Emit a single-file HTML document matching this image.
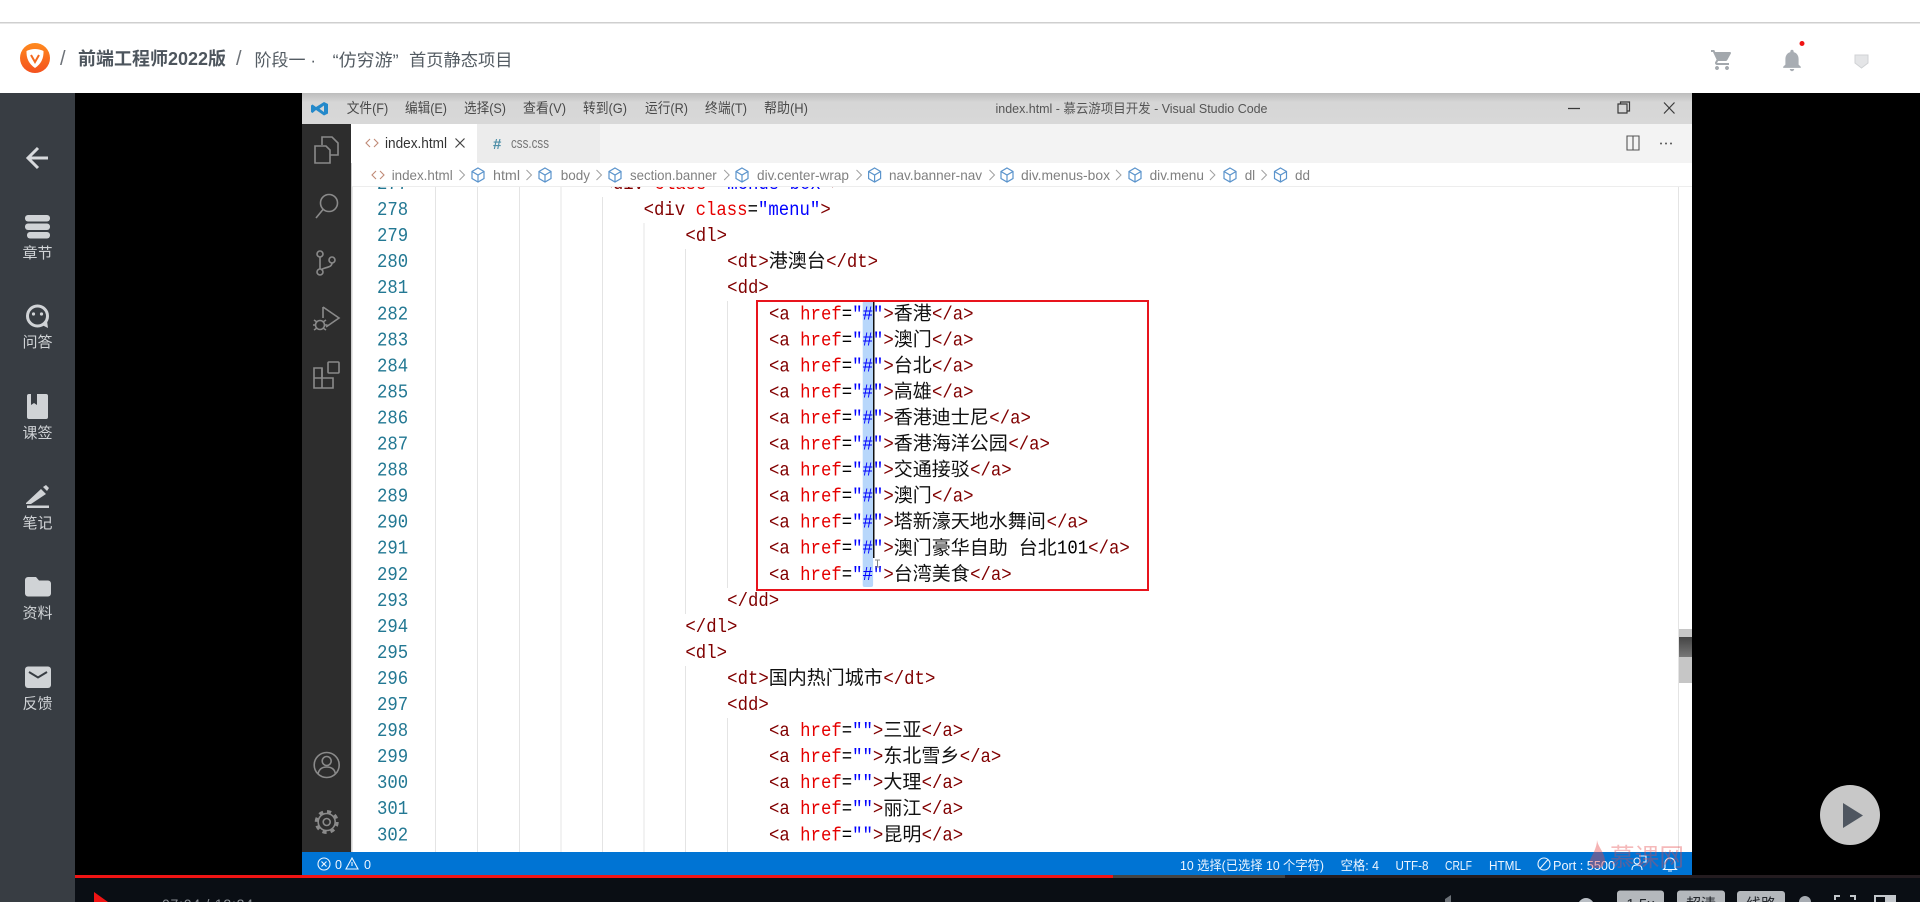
<!DOCTYPE html>
<html lang="zh"><head><meta charset="utf-8"><title>仿穷游首页静态项目</title>
<style>
html,body{margin:0;padding:0;background:#000;width:1920px;height:902px;overflow:hidden}
svg{display:block}
text{font-family:"Liberation Sans","Noto Sans CJK SC",sans-serif}
.m{font-family:"Liberation Mono",monospace;font-size:19px;fill:#800000;transform:scaleX(.9123)}
.n{fill:#237893}
.a{fill:#e50000}.e{fill:#000}.v{fill:#0000ff}
.c{font-family:"Noto Sans CJK SC",sans-serif;font-size:19px;fill:#111}
.s{font-size:15px;fill:#d0d3d6;text-anchor:middle}
.mn{font-size:14px;fill:#4a4a4a}
.b{font-size:14px;fill:#808080}
.st{font-size:13px;fill:#eef6ff}
.vid{filter:blur(.35px)}
.i{fill:none;stroke:#8a8a8a;stroke-width:1.6}
.ch{fill:none;stroke:#a0a0a0;stroke-width:1}
.cu{fill:none;stroke:#5b94cc;stroke-width:1.2}
.ht{fill:none;stroke:#c08a76;stroke-width:1.1}
</style></head><body>
<svg width="1920" height="902" viewBox="0 0 1920 902" xmlns="http://www.w3.org/2000/svg">
<defs>
<linearGradient id="lg" x1="0" y1="0" x2="0" y2="1"><stop offset="0" stop-color="#ff8a1e"/><stop offset="1" stop-color="#f4511e"/></linearGradient>
<linearGradient id="tb" x1="0" y1="0" x2="0" y2="1"><stop offset="0" stop-color="#bdbdbd"/><stop offset=".3" stop-color="#d6d6d6"/><stop offset="1" stop-color="#d8d8d8"/></linearGradient>
<linearGradient id="sl" x1="0" y1="0" x2="0" y2="1"><stop offset="0" stop-color="#444"/><stop offset="1" stop-color="#777"/></linearGradient>
<g id="cube"><path class="cu" d="M0-7 6-3.5V3.5L0 7-6 3.5V-3.5ZM-6-3.5 0 0 6-3.5M0 0V7"/></g>
<g id="chev"><path class="ch" d="M-2.5-5 2.5 0-2.5 5"/></g>
<g id="ht"><path class="ht" d="M-2-4-6 0-2 4M2-4 6 0 2 4"/></g>
</defs>
<rect width="1920" height="902" fill="#000"/>
<!-- header -->
<rect width="1920" height="93" fill="#fff"/>
<rect y="22" width="1920" height="1.5" fill="#cfcfcf"/>
<circle cx="35" cy="58" r="15" fill="url(#lg)"/>
<path d="M26.5 51Q35 47 43.5 51 44 62 35 68 26 62 26.5 51Z" fill="#fff"/>
<path d="M31 55 35 62 39 55" fill="none" stroke="#f4691e" stroke-width="2"/>
<text x="60" y="65" font-size="20" fill="#6d7278">/</text>
<text x="78" y="65" font-size="18" font-weight="700" fill="#4d555d" textLength="148" lengthAdjust="spacingAndGlyphs">前端工程师2022版</text>
<text x="236" y="65" font-size="20" fill="#6d7278">/</text>
<text x="254.5" y="66" font-size="17" fill="#545c63" textLength="61.500" lengthAdjust="spacingAndGlyphs">阶段一 ·</text>
<text x="332.600" y="66" font-size="17" fill="#545c63" textLength="66" lengthAdjust="spacingAndGlyphs">“仿穷游”</text>
<text x="409" y="66" font-size="17" fill="#545c63" textLength="103.500" lengthAdjust="spacingAndGlyphs">首页静态项目</text>
<path transform="translate(1710,48)" fill="#a3a8ad" d="M7 18c-1.1 0-1.99.9-1.99 2S5.9 22 7 22s2-.9 2-2-.9-2-2-2zM1 2v2h2l3.6 7.59-1.35 2.45c-.16.28-.25.61-.25.96 0 1.1.9 2 2 2h12v-2H7.42c-.14 0-.25-.11-.25-.25l.03-.12.9-1.63h7.45c.75 0 1.41-.41 1.75-1.03l3.58-6.47c.08-.14.12-.31.12-.48 0-.55-.45-1-1-1H5.21l-.94-2H1zm16 16c-1.1 0-1.99.9-1.99 2s.89 2 1.99 2 2-.9 2-2-.9-2-2-2z"/>
<path transform="translate(1778.8,47) scale(1.1)" fill="#a8adb3" d="M12 22c1.1 0 2-.9 2-2h-4c0 1.1.9 2 2 2zm6-6v-5c0-3.07-1.63-5.64-4.5-6.32V4c0-.83-.67-1.5-1.5-1.5s-1.5.67-1.5 1.5v.68C7.64 5.36 6 7.92 6 11v5l-2 2v1h16v-1l-2-2z"/>
<circle cx="1802" cy="43.5" r="2.5" fill="#f01414"/>
<path d="M1855 55h13v8l-6.5 5-6.5-5Z" fill="#e4e5e7" stroke="#d0d2d4"/>
<!-- sidebar -->
<rect y="93" width="75" height="809" fill="#383d43"/>
<path d="M48 158H29M38 148 28 158 38 168" fill="none" stroke="#d8dadd" stroke-width="3"/>
<g fill="#d0d3d6">
<rect x="25" y="215" width="25" height="6.5" rx="3"/><rect x="25" y="223.5" width="25" height="6.5" rx="3"/><rect x="27" y="232" width="23" height="6.5" rx="3"/>
<text class="s" x="37.5" y="258">章节</text>
<circle cx="37.5" cy="316" r="10" fill="none" stroke="#d0d3d6" stroke-width="3"/><circle cx="33.5" cy="314" r="1.6"/><circle cx="41.5" cy="314" r="1.6"/><path d="M42 325l6 3-1-7Z"/>
<text class="s" x="37.5" y="347">问答</text>
<rect x="27" y="394" width="21" height="25" rx="2"/><path d="M31 394v11l3-2 3 2V394Z" fill="#383d43"/>
<text class="s" x="37.5" y="438">课签</text>
<path d="M26 503 41 489l5 5-15 10H26ZM43 487l3-2 3 3-2 3ZM27 505.5h22v2.5H27Z"/>
<text class="s" x="37.5" y="528">笔记</text>
<path d="M25 580a3 3 0 0 1 3-3h8l3 3.500h9a3 3 0 0 1 3 3v10a3 3 0 0 1-3 3H28a3 3 0 0 1-3-3Z"/>
<text class="s" x="37.5" y="618">资料</text>
<rect x="25" y="666.5" width="26" height="21.500" rx="3"/><path d="M29 672 38 677.500 47 672" fill="none" stroke="#383d43" stroke-width="2"/>
<text class="s" x="37.500" y="708.500">反馈</text>
</g>
<!-- bottom bar -->
<rect x="75" y="875" width="1845" height="27" fill="#0a0e14"/>
<rect x="75" y="875" width="1845" height="3" fill="#241c20"/>
<rect x="75" y="875" width="1210" height="3" fill="#444"/>
<rect x="75" y="875" width="1038" height="3" fill="#f01414"/>
<path d="M94 892 108 902 94 912Z" fill="#f01414"/>
<text x="162" y="909" font-size="14" fill="#8a8f95" textLength="91">07:04 / 12:24</text>
<path d="M1445 902v-3l6-4v7Z" fill="#6d7278"/>
<circle cx="1586" cy="906" r="8" fill="#b9bec4"/>
<g fill="#b4b8bc"><rect x="1617" y="890.500" width="47" height="20" rx="3"/><rect x="1677" y="890.500" width="48" height="20" rx="3"/><rect x="1737" y="891" width="48" height="20" rx="3"/></g>
<g font-size="15" fill="#22262b" text-anchor="middle"><text x="1640.500" y="909">1.5x</text><text x="1701" y="909">超清</text><text x="1761" y="909">线路</text></g>
<circle cx="1805" cy="902" r="6" fill="#a7acb2"/>
<path d="M1835 900v-4h5M1850 896h5v4" fill="none" stroke="#c3c7cc" stroke-width="2"/>
<path d="M1875 902v-6h20v6" fill="none" stroke="#c3c7cc" stroke-width="2"/><rect x="1885" y="896" width="10" height="6" fill="#c3c7cc"/>
<!-- play -->
<circle cx="1850" cy="815" r="30" fill="#c8c8c8"/>
<path d="M1843 803 1863 815.500 1843 828Z" fill="#4f5660"/>
<!-- VS Code video -->
<g class="vid">
<rect x="302" y="93" width="1390" height="782" fill="#fff"/>
<rect x="302" y="93" width="1390" height="31" fill="url(#tb)"/>
<path fill="#2489ca" fill-rule="evenodd" d="M324 102 328 104V113.500L324 115.500 316 110 312.500 113 311 112V105.500L312.500 104.500 316 107ZM324 105.500 319.500 108.750 324 112Z"/>
<g class="mn">
<text x="346.700" y="113" textLength="41.600" lengthAdjust="spacingAndGlyphs">文件(F)</text>
<text x="405" y="113" textLength="42" lengthAdjust="spacingAndGlyphs">编辑(E)</text>
<text x="464" y="113" textLength="42" lengthAdjust="spacingAndGlyphs">选择(S)</text>
<text x="523" y="113" textLength="43" lengthAdjust="spacingAndGlyphs">查看(V)</text>
<text x="583" y="113" textLength="44" lengthAdjust="spacingAndGlyphs">转到(G)</text>
<text x="645" y="113" textLength="43" lengthAdjust="spacingAndGlyphs">运行(R)</text>
<text x="705" y="113" textLength="42" lengthAdjust="spacingAndGlyphs">终端(T)</text>
<text x="764" y="113" textLength="44" lengthAdjust="spacingAndGlyphs">帮助(H)</text>
</g>
<text x="995.500" y="113" font-size="13" fill="#555" textLength="272" lengthAdjust="spacingAndGlyphs">index.html - 慕云游项目开发 - Visual Studio Code</text>
<path d="M1568 108.500h12M1618 104h9v9h-9ZM1620.500 104v-2h9v9h-2.500M1664 102.500l10.500 11M1674.500 102.500l-10.500 11" fill="none" stroke="#3a3a3a" stroke-width="1.200"/>
<!-- activity -->
<rect x="302" y="124" width="49" height="728" fill="#2d2d2d"/>
<g class="i">
<path d="M322 145v-8h10l6 6v12h-8"/><path d="M315 146h11l4 4v13h-15Z"/>
<circle cx="329" cy="203" r="8.500"/><path d="M323 209.500 316 218"/>
<circle cx="320" cy="254" r="3"/><circle cx="320" cy="272" r="3"/><circle cx="332" cy="260" r="3"/><path d="M320 257v12M332 263c0 5-8 4-11 7"/>
<path d="M323 307 339 318 326 327M323 307v11"/><circle cx="320" cy="325" r="4.500"/><path d="M314 320l3 2M326 320l-3 2M313 325h2.500M325 325h2.500M314 330l3-2M326 330l-3-2"/>
<path d="M314 368h8v20h-8ZM314 378h19v10h-11"/><path d="M322 378v-10h0"/><rect x="328" y="362" width="11" height="11" rx="1"/>
<circle cx="326.700" cy="765" r="12.500"/><circle cx="326.700" cy="761" r="4.500"/><path d="M318 774c1-5 4-7 8.700-7s8 2 8.700 7"/>
<circle cx="326.700" cy="822" r="3.500"/><circle cx="326.700" cy="822" r="8.500"/><circle cx="326.700" cy="822" r="10.500" stroke-width="3" stroke-dasharray="4.200 4.050"/>
</g>
<!-- tabs -->
<rect x="351" y="124" width="1341" height="39" fill="#f3f3f3"/>
<rect x="351" y="124" width="126" height="39" fill="#fff"/>
<rect x="477" y="124" width="123" height="39" fill="#ececec"/>
<use href="#ht" x="372" y="143"/>
<text x="385" y="148" font-size="14.500" fill="#333" textLength="62" lengthAdjust="spacingAndGlyphs">index.html</text>
<path d="M455.500 138.500l9 9M464.500 138.500l-9 9" stroke="#444" stroke-width="1.200" fill="none"/>
<text x="493" y="149" font-size="15" font-weight="700" fill="#4f8fa8">#</text>
<text x="511" y="148" font-size="14.500" fill="#777" textLength="38" lengthAdjust="spacingAndGlyphs">css.css</text>
<path d="M1627 136h12v14h-12ZM1633 136v14" fill="none" stroke="#555" stroke-width="1.100"/>
<g fill="#555"><circle cx="1661" cy="143.500" r="1"/><circle cx="1666" cy="143.500" r="1"/><circle cx="1671" cy="143.500" r="1"/></g>
<!-- editor -->
<rect x="351" y="163" width="1.500" height="689" fill="#cfcfcf"/>
<g fill="#e4e4e4">
<rect x="435" y="186" width="1" height="666"/><rect x="477" y="186" width="1" height="666"/><rect x="519" y="186" width="1" height="666"/><rect x="560.500" y="186" width="1" height="666"/>
<rect x="602" y="197" width="1" height="655"/><rect x="643.500" y="223" width="1" height="629"/>
<rect x="685" y="249" width="1" height="365"/><rect x="685" y="666" width="1" height="186"/>
<rect x="727" y="301" width="1" height="287"/><rect x="727" y="718" width="1" height="134"/>
<rect x="1678" y="186" width="1" height="666"/>
</g>
<rect x="862.700" y="301" width="10.400" height="286" rx="2" fill="#b8d7fb"/>
<g transform="translate(0,-1)">
<!-- line numbers -->
<g>
<text class="m n" x="413.200" y="190.050">277</text>
<text class="m n" x="413.200" y="216.100">278</text>
<text class="m n" x="413.200" y="242.150">279</text>
<text class="m n" x="413.200" y="268.200">280</text>
<text class="m n" x="413.200" y="294.250">281</text>
<text class="m n" x="413.200" y="320.300">282</text>
<text class="m n" x="413.200" y="346.350">283</text>
<text class="m n" x="413.200" y="372.400">284</text>
<text class="m n" x="413.200" y="398.450">285</text>
<text class="m n" x="413.200" y="424.500">286</text>
<text class="m n" x="413.200" y="450.550">287</text>
<text class="m n" x="413.200" y="476.600">288</text>
<text class="m n" x="413.200" y="502.650">289</text>
<text class="m n" x="413.200" y="528.700">290</text>
<text class="m n" x="413.200" y="554.750">291</text>
<text class="m n" x="413.200" y="580.800">292</text>
<text class="m n" x="413.200" y="606.850">293</text>
<text class="m n" x="413.200" y="632.900">294</text>
<text class="m n" x="413.200" y="658.950">295</text>
<text class="m n" x="413.200" y="685">296</text>
<text class="m n" x="413.200" y="711.050">297</text>
<text class="m n" x="413.200" y="737.100">298</text>
<text class="m n" x="413.200" y="763.150">299</text>
<text class="m n" x="413.200" y="789.200">300</text>
<text class="m n" x="413.200" y="815.250">301</text>
<text class="m n" x="413.200" y="841.300">302</text>
</g>
<!-- code -->
<text class="m" x="660.400" y="190.050">&lt;div <tspan class="a">class</tspan><tspan class="e">=</tspan><tspan class="v">"menus-box"</tspan>&gt;</text>
<text class="m" x="705.500" y="216.100">&lt;div <tspan class="a">class</tspan><tspan class="e">=</tspan><tspan class="v">"menu"</tspan>&gt;</text>
<text class="m" x="751.300" y="242.150">&lt;dl&gt;</text>
<text class="m" x="797.100" y="268.200">&lt;dt&gt;</text><text class="c" x="768.800" y="268.200">港澳台</text><text class="m" x="905.500" y="268.200">&lt;/dt&gt;</text>
<text class="m" x="797.100" y="294.250">&lt;dd&gt;</text>

<text class="m" x="842.900" y="320.300">&lt;a <tspan class="a">href</tspan><tspan class="e">=</tspan><tspan class="v">"#"</tspan>&gt;</text><text class="c" x="893.800" y="320.300">香港</text><text class="m" x="1021.600" y="320.300">&lt;/a&gt;</text>
<text class="m" x="842.900" y="346.350">&lt;a <tspan class="a">href</tspan><tspan class="e">=</tspan><tspan class="v">"#"</tspan>&gt;</text><text class="c" x="893.800" y="346.350">澳门</text><text class="m" x="1021.600" y="346.350">&lt;/a&gt;</text>
<text class="m" x="842.900" y="372.400">&lt;a <tspan class="a">href</tspan><tspan class="e">=</tspan><tspan class="v">"#"</tspan>&gt;</text><text class="c" x="893.800" y="372.400">台北</text><text class="m" x="1021.600" y="372.400">&lt;/a&gt;</text>
<text class="m" x="842.900" y="398.450">&lt;a <tspan class="a">href</tspan><tspan class="e">=</tspan><tspan class="v">"#"</tspan>&gt;</text><text class="c" x="893.800" y="398.450">高雄</text><text class="m" x="1021.600" y="398.450">&lt;/a&gt;</text>
<text class="m" x="842.900" y="424.500">&lt;a <tspan class="a">href</tspan><tspan class="e">=</tspan><tspan class="v">"#"</tspan>&gt;</text><text class="c" x="893.800" y="424.500">香港迪士尼</text><text class="m" x="1084.400" y="424.500">&lt;/a&gt;</text>
<text class="m" x="842.900" y="450.550">&lt;a <tspan class="a">href</tspan><tspan class="e">=</tspan><tspan class="v">"#"</tspan>&gt;</text><text class="c" x="893.800" y="450.550">香港海洋公园</text><text class="m" x="1105.300" y="450.550">&lt;/a&gt;</text>
<text class="m" x="842.900" y="476.600">&lt;a <tspan class="a">href</tspan><tspan class="e">=</tspan><tspan class="v">"#"</tspan>&gt;</text><text class="c" x="893.800" y="476.600">交通接驳</text><text class="m" x="1063.400" y="476.600">&lt;/a&gt;</text>
<text class="m" x="842.900" y="502.650">&lt;a <tspan class="a">href</tspan><tspan class="e">=</tspan><tspan class="v">"#"</tspan>&gt;</text><text class="c" x="893.800" y="502.650">澳门</text><text class="m" x="1021.600" y="502.650">&lt;/a&gt;</text>
<text class="m" x="842.900" y="528.700">&lt;a <tspan class="a">href</tspan><tspan class="e">=</tspan><tspan class="v">"#"</tspan>&gt;</text><text class="c" x="893.800" y="528.700">塔新濠天地水舞间</text><text class="m" x="1147.200" y="528.700">&lt;/a&gt;</text>
<text class="m" x="842.900" y="554.750">&lt;a <tspan class="a">href</tspan><tspan class="e">=</tspan><tspan class="v">"#"</tspan>&gt;</text><text class="c" x="893.800" y="554.750">澳门豪华自助</text><text class="c" x="1018.800" y="554.750">台北</text><text class="m" x="1158.600" y="554.750"><tspan class="e">101</tspan>&lt;/a&gt;</text>
<text class="m" x="842.900" y="580.800">&lt;a <tspan class="a">href</tspan><tspan class="e">=</tspan><tspan class="v">"#"</tspan>&gt;</text><text class="c" x="893.800" y="580.800">台湾美食</text><text class="m" x="1063.400" y="580.800">&lt;/a&gt;</text>

<text class="m" x="797.100" y="606.850">&lt;/dd&gt;</text>
<text class="m" x="751.300" y="632.900">&lt;/dl&gt;</text>
<text class="m" x="751.300" y="658.950">&lt;dl&gt;</text>
<text class="m" x="797.100" y="685">&lt;dt&gt;</text><text class="c" x="768.800" y="685">国内热门城市</text><text class="m" x="968.300" y="685">&lt;/dt&gt;</text>
<text class="m" x="797.100" y="711.050">&lt;dd&gt;</text>

<text class="m" x="842.900" y="737.100">&lt;a <tspan class="a">href</tspan><tspan class="e">=</tspan><tspan class="v">""</tspan>&gt;</text><text class="c" x="883.400" y="737.100">三亚</text><text class="m" x="1010.200" y="737.100">&lt;/a&gt;</text>
<text class="m" x="842.900" y="763.150">&lt;a <tspan class="a">href</tspan><tspan class="e">=</tspan><tspan class="v">""</tspan>&gt;</text><text class="c" x="883.400" y="763.150">东北雪乡</text><text class="m" x="1052" y="763.150">&lt;/a&gt;</text>
<text class="m" x="842.900" y="789.200">&lt;a <tspan class="a">href</tspan><tspan class="e">=</tspan><tspan class="v">""</tspan>&gt;</text><text class="c" x="883.400" y="789.200">大理</text><text class="m" x="1010.200" y="789.200">&lt;/a&gt;</text>
<text class="m" x="842.900" y="815.250">&lt;a <tspan class="a">href</tspan><tspan class="e">=</tspan><tspan class="v">""</tspan>&gt;</text><text class="c" x="883.400" y="815.250">丽江</text><text class="m" x="1010.200" y="815.250">&lt;/a&gt;</text>
<text class="m" x="842.900" y="841.300">&lt;a <tspan class="a">href</tspan><tspan class="e">=</tspan><tspan class="v">""</tspan>&gt;</text><text class="c" x="883.400" y="841.300">昆明</text><text class="m" x="1010.200" y="841.300">&lt;/a&gt;</text>
</g>

<rect x="873" y="301" width="1.500" height="257" fill="#111"/>
<path d="M875 560h5M877.500 560v7M875 567h5" stroke="#888" stroke-width="1" fill="none"/>
<rect x="757" y="301" width="391" height="289" fill="none" stroke="#e8141d" stroke-width="2"/>
<!-- scrollbar -->
<rect x="1679" y="629" width="13" height="54" fill="#c6c6c6"/>
<rect x="1679" y="637" width="13" height="20" fill="url(#sl)"/>
<!-- breadcrumb -->
<rect x="352" y="163" width="1340" height="23" fill="#fff"/>
<rect x="352" y="186" width="1340" height="1" fill="#ededed"/>
<use href="#ht" x="378" y="175"/>
<text class="b" x="391.700" y="180" textLength="61" lengthAdjust="spacingAndGlyphs">index.html</text>
<use href="#chev" x="462" y="175"/><use href="#cube" x="478" y="175"/>
<text class="b" x="493" y="180" textLength="27" lengthAdjust="spacingAndGlyphs">html</text>
<use href="#chev" x="529" y="175"/><use href="#cube" x="545" y="175"/>
<text class="b" x="560.700" y="180" textLength="29.300" lengthAdjust="spacingAndGlyphs">body</text>
<use href="#chev" x="599" y="175"/><use href="#cube" x="615" y="175"/>
<text class="b" x="630" y="180" textLength="86.700" lengthAdjust="spacingAndGlyphs">section.banner</text>
<use href="#chev" x="726.700" y="175"/><use href="#cube" x="742" y="175"/>
<text class="b" x="757" y="180" textLength="92" lengthAdjust="spacingAndGlyphs">div.center-wrap</text>
<use href="#chev" x="859" y="175"/><use href="#cube" x="874.600" y="175"/>
<text class="b" x="889" y="180" textLength="93" lengthAdjust="spacingAndGlyphs">nav.banner-nav</text>
<use href="#chev" x="992" y="175"/><use href="#cube" x="1007" y="175"/>
<text class="b" x="1021" y="180" textLength="89" lengthAdjust="spacingAndGlyphs">div.menus-box</text>
<use href="#chev" x="1118.500" y="175"/><use href="#cube" x="1135" y="175"/>
<text class="b" x="1149.600" y="180" textLength="54.400" lengthAdjust="spacingAndGlyphs">div.menu</text>
<use href="#chev" x="1212.400" y="175"/><use href="#cube" x="1230" y="175"/>
<text class="b" x="1244.700" y="180" textLength="10.500" lengthAdjust="spacingAndGlyphs">dl</text>
<use href="#chev" x="1264" y="175"/><use href="#cube" x="1280.500" y="175"/>
<text class="b" x="1295" y="180" textLength="15" lengthAdjust="spacingAndGlyphs">dd</text>
<!-- status bar -->
<rect x="302" y="852" width="1390" height="23" fill="#0074d4"/>
<g fill="none" stroke="#eef6ff" stroke-width="1.100"><circle cx="324" cy="864" r="6"/><path d="M321.500 861.500l5 5M326.500 861.500l-5 5M352 858l6 11h-12ZM352 862v4"/></g>
<text class="st" x="335" y="869" textLength="7" lengthAdjust="spacingAndGlyphs">0</text>
<text class="st" x="364" y="869" textLength="7" lengthAdjust="spacingAndGlyphs">0</text>
<text class="st" x="1180" y="870" textLength="144" lengthAdjust="spacingAndGlyphs">10 选择(已选择 10 个字符)</text>
<text class="st" x="1340.600" y="870" textLength="38.400" lengthAdjust="spacingAndGlyphs">空格: 4</text>
<text class="st" x="1395.500" y="870" textLength="33" lengthAdjust="spacingAndGlyphs">UTF-8</text>
<text class="st" x="1445" y="870" textLength="27" lengthAdjust="spacingAndGlyphs">CRLF</text>
<text class="st" x="1489" y="870" textLength="32" lengthAdjust="spacingAndGlyphs">HTML</text>
<g fill="none" stroke="#eef6ff" stroke-width="1.100"><circle cx="1544" cy="864" r="6"/><path d="M1540 868.500l8-9M1632 870c0-4 2-5 5-5s5 1 5 5"/><circle cx="1637" cy="861" r="3"/><path d="M1639 856h7v6h-3"/><path d="M1665 868v-5a5 5 0 0 1 10 0v5l1.500 1.500h-13ZM1668 871h4"/></g>
<text class="st" x="1553" y="870" textLength="62" lengthAdjust="spacingAndGlyphs">Port : 5500</text>
<!-- watermark -->
<path d="M1597 840c1 7 8 13 8 21 0 4-3 7-7 7h-5c-3-1-4-4-3-8 2-5 7-12 7-20Z" fill="#e6484a" fill-opacity=".42"/>
<text x="1610" y="866" font-size="25" fill="#e6484a" fill-opacity=".38" textLength="74" lengthAdjust="spacingAndGlyphs">慕课网</text>
</g>
</svg>
</body></html>
